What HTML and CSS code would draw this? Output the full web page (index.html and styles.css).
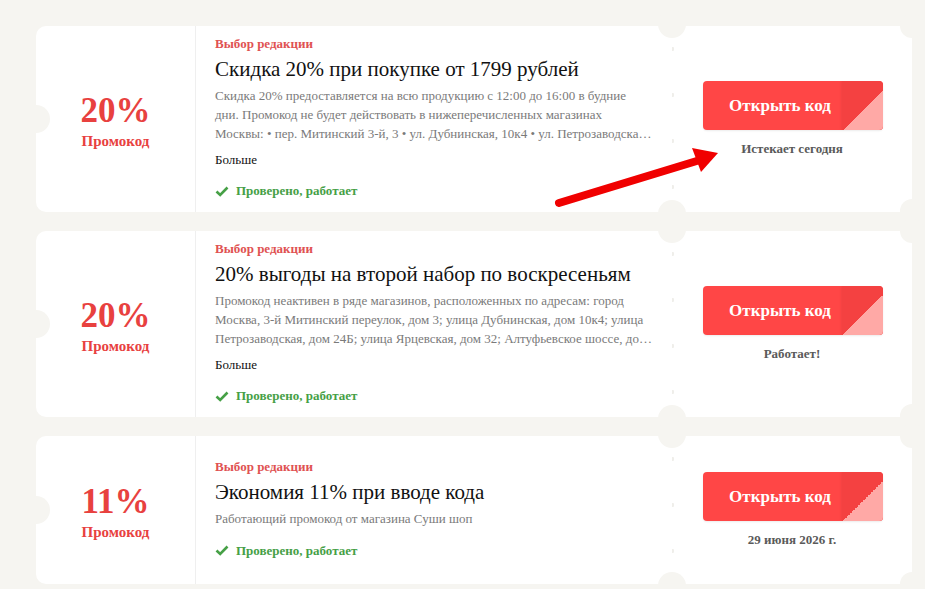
FILE: index.html
```html
<!DOCTYPE html>
<html lang="ru">
<head>
<meta charset="utf-8">
<link rel="stylesheet" href="styles.css">
</head>
<body>
<div class="list">
  <div class="card">
    <div class="left">
      <div class="value">20%</div>
      <div class="kind">Промокод</div>
    </div>
    <div class="mid">
      <div class="label">Выбор редакции</div>
      <div class="title">Скидка 20% при покупке от 1799 рублей</div>
      <div class="desc">Скидка 20% предоставляется на всю продукцию с 12:00 до 16:00 в будние дни. Промокод не будет действовать в нижеперечисленных магазинах Москвы: • пер. Митинский 3-й, 3 • ул. Дубнинская, 10к4 • ул. Петрозаводска…</div>
      <div class="more">Больше</div>
      <div class="checked"><svg class="tick" viewBox="0 0 14 11" width="14" height="11"><path d="M1.5 5.5 L5.2 9 L12.5 1.5" fill="none" stroke="#46a046" stroke-width="2.6"/></svg>Проверено, работает</div>
    </div>
    <div class="right">
      <div class="btn"><span class="btn-text">Открыть код</span><span class="fold"></span><span class="fold-tri"></span></div>
      <div class="note">Истекает сегодня</div>
    </div>
  </div>

  <div class="card">
    <div class="left">
      <div class="value">20%</div>
      <div class="kind">Промокод</div>
    </div>
    <div class="mid">
      <div class="label">Выбор редакции</div>
      <div class="title">20% выгоды на второй набор по воскресеньям</div>
      <div class="desc">Промокод неактивен в ряде магазинов, расположенных по адресам: город Москва, 3-й Митинский переулок, дом 3; улица Дубнинская, дом 10к4; улица Петрозаводская, дом 24Б; улица Ярцевская, дом 32; Алтуфьевское шоссе, до…</div>
      <div class="more">Больше</div>
      <div class="checked"><svg class="tick" viewBox="0 0 14 11" width="14" height="11"><path d="M1.5 5.5 L5.2 9 L12.5 1.5" fill="none" stroke="#46a046" stroke-width="2.6"/></svg>Проверено, работает</div>
    </div>
    <div class="right">
      <div class="btn"><span class="btn-text">Открыть код</span><span class="fold"></span><span class="fold-tri"></span></div>
      <div class="note">Работает!</div>
    </div>
  </div>

  <div class="card">
    <div class="left">
      <div class="value">11%</div>
      <div class="kind">Промокод</div>
    </div>
    <div class="mid">
      <div class="label">Выбор редакции</div>
      <div class="title">Экономия 11% при вводе кода</div>
      <div class="desc">Работающий промокод от магазина Суши шоп</div>
      <div class="checked"><svg class="tick" viewBox="0 0 14 11" width="14" height="11"><path d="M1.5 5.5 L5.2 9 L12.5 1.5" fill="none" stroke="#46a046" stroke-width="2.6"/></svg>Проверено, работает</div>
    </div>
    <div class="right">
      <div class="btn"><span class="btn-text">Открыть код</span><span class="fold"></span><span class="fold-tri"></span></div>
      <div class="note">29 июня 2026 г.</div>
    </div>
  </div>
</div>
<svg class="arrow" width="925" height="589" viewBox="0 0 925 589">
  <line x1="559" y1="203" x2="700" y2="160" stroke="#f00000" stroke-width="8" stroke-linecap="round"/>
  <polygon points="692,148 718,153 701,172" fill="#f00000"/>
</svg>
</body>
</html>
```

FILE: styles.css
```css
html, body {
  margin: 0;
  padding: 0;
  background: #f6f5f1;
}
body {
  font-family: "Liberation Serif", "Times New Roman", serif;
  position: relative;
  width: 925px;
  height: 589px;
  overflow: hidden;
}
.list {
  padding: 26px 0 0 36px;
  display: flex;
  flex-direction: column;
  gap: 19px;
  width: 876px;
}
.card {
  position: relative;
  display: flex;
  background: #fff;
  border-radius: 10px 0 0 10px;
  min-height: 148px;
}
.card::before {
  content: "";
  position: absolute;
  left: -14px;
  top: 50%;
  margin-top: -14px;
  width: 28px;
  height: 28px;
  border-radius: 50%;
  background: #f6f5f1;
}
.left {
  width: 159px;
  flex: none;
  border-right: 1px solid #efefef;
  display: flex;
  flex-direction: column;
  align-items: center;
  justify-content: center;
  color: #e8413f;
  font-weight: bold;
  padding-top: 2px;
}
.value {
  font-size: 35px;
  line-height: 40px;
}
.kind {
  font-size: 15px;
  line-height: 18px;
  margin-top: 1px;
}
.mid {
  width: 437px;
  flex: none;
  padding: 10px 20px 13px 19px;
  align-self: center;
}
.label {
  color: #e05252;
  font-weight: bold;
  font-size: 13px;
  line-height: 16px;
}
.title {
  font-size: 21px;
  line-height: 26px;
  margin-top: 4px;
  color: #111;
}
.desc {
  font-size: 13px;
  line-height: 19px;
  color: #7a7a7a;
  margin-top: 4px;
}
.more {
  font-size: 13px;
  line-height: 16px;
  margin-top: 9px;
  color: #111;
}
.checked {
  margin-top: 15px;
  font-size: 13px;
  line-height: 16px;
  font-weight: bold;
  color: #46a046;
  display: flex;
  align-items: center;
}
.tick {
  margin-right: 7px;
}
.right {
  position: relative;
  width: 240px;
  flex: none;
  display: flex;
  flex-direction: column;
  align-items: center;
  justify-content: center;
  background-image: radial-gradient(circle, #efeeea 2px, transparent 2.5px);
  background-size: 4px 46px;
  background-position: -2px 0;
  background-repeat: repeat-y;
}
.right::before,
.right::after {
  content: "";
  position: absolute;
  left: -14px;
  width: 28px;
  height: 28px;
  border-radius: 50%;
  background: #f6f5f1;
}
.right::before { top: -16px; }
.right::after { bottom: -16px; }
.btn {
  position: relative;
  width: 180px;
  height: 49px;
  margin-left: 2px;
  background: #ff4646;
  border-radius: 4px;
  display: flex;
  align-items: center;
  justify-content: center;
  overflow: hidden;
  box-shadow: 0 1px 2px rgba(0,0,0,0.08);
}
.btn-text {
  color: #fff;
  font-weight: bold;
  font-size: 17px;
  padding-right: 26px;
  position: relative;
  z-index: 2;
}
.fold {
  position: absolute;
  right: 0;
  top: 0;
  width: 41px;
  height: 100%;
  background: #f44141;
  box-shadow: -1px 0 2px rgba(0,0,0,0.06);
}
.fold-tri {
  position: absolute;
  right: 0;
  bottom: 0;
  width: 40px;
  height: 40px;
  background: linear-gradient(to top left, #ffa9a6 50%, transparent 50%);
}
.note {
  margin-top: 11px;
  font-size: 13px;
  line-height: 16px;
  font-weight: bold;
  color: #5a5a5a;
}
.card::after {
  content: "";
  position: absolute;
  right: -12px;
  top: -12px;
  width: 24px;
  height: 24px;
  border-radius: 50%;
  background: #f6f5f1;
  box-shadow: 0 185px 0 #f6f5f1;
}
.card:last-child::after {
  box-shadow: 0 148px 0 #f6f5f1;
}
.arrow {
  position: absolute;
  left: 0;
  top: 0;
  pointer-events: none;
}
```
